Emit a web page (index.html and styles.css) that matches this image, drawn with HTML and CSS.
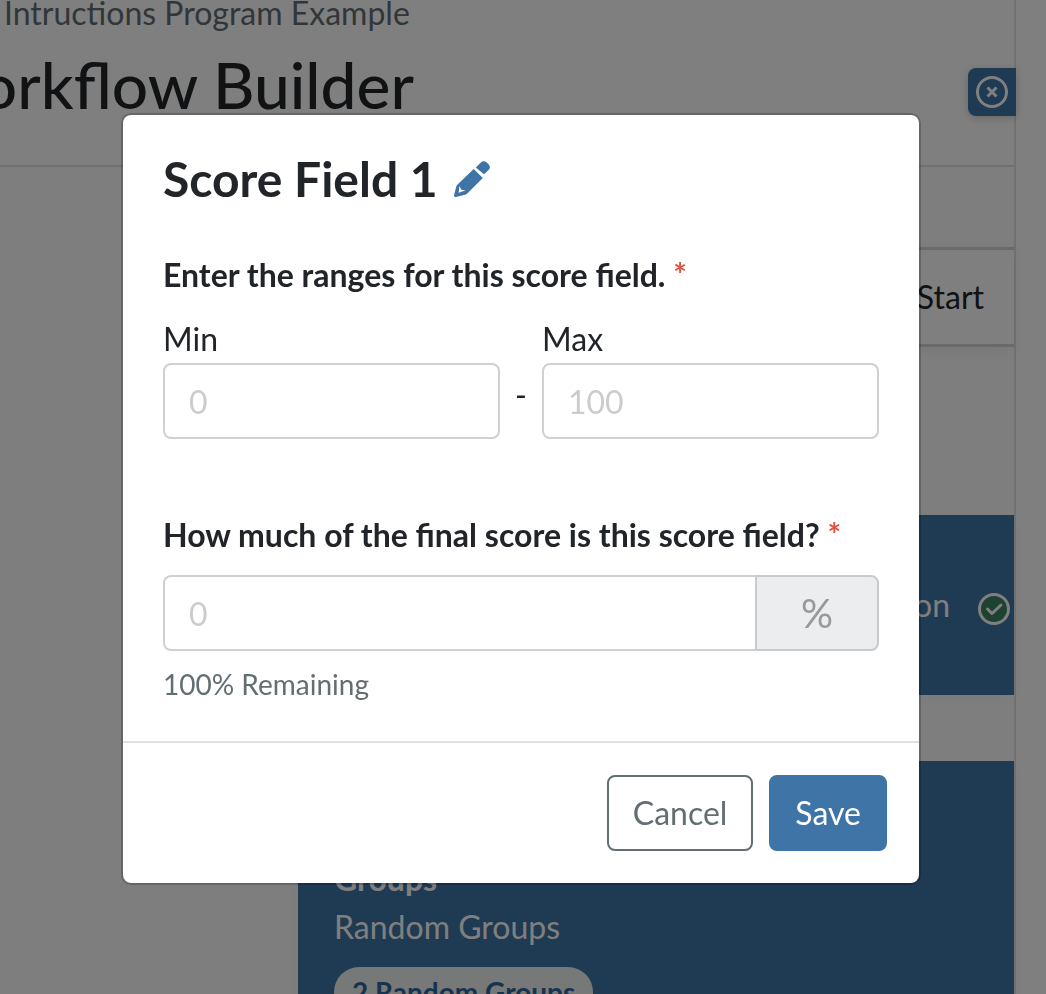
FILE: index.html
```html
<!DOCTYPE html>
<html lang="en">
<head>
    <meta charset="UTF-8">
    <meta name="viewport" content="width=device-width, initial-scale=1.0">
    <title>Workflow Builder</title>
    <link rel="stylesheet" href="styles.css">
</head>
<body>
    <main class="workspace">
        <header class="page-header">
            <p class="program-name">Intructions Program Example</p>
            <h1 class="page-title">Workflow Builder</h1>
            <button class="panel-close" type="button" aria-label="Close">
                <svg width="32" height="32" viewBox="0 0 32 32" fill="none" stroke="currentColor" stroke-width="3">
                    <circle cx="16" cy="16" r="14.5"/>
                    <path d="M11.5 11.5l9 9M20.5 11.5l-9 9"/>
                </svg>
            </button>
        </header>

        <section class="canvas">
            <div class="start-node">Start</div>

            <article class="step-card step-card-summary">
                <span>on</span>
                <svg class="step-check" width="32" height="32" viewBox="0 0 32 32" fill="none" stroke="#fff" stroke-width="3">
                    <circle cx="16" cy="16" r="14.5" fill="#3a8465"/>
                    <path d="M9.5 16l4.5 4.5 9-8.5" stroke-linecap="round" stroke-linejoin="round"/>
                </svg>
            </article>

            <article class="step-card step-card-groups">
                <h2 class="step-title">Groups</h2>
                <p class="step-text">Random Groups</p>
                <span class="step-pill">2 Random Groups</span>
            </article>
        </section>
    </main>

    <div class="modal-backdrop">
        <form class="modal" role="dialog" aria-labelledby="modal-title">
            <div class="modal-body">
                <div class="modal-heading">
                    <h2 class="modal-title" id="modal-title">Score Field 1</h2>
                    <button class="edit-button" type="button" aria-label="Edit name">
                        <svg width="36" height="36" viewBox="0 0 36 36" fill="currentColor">
                            <path d="M22.3 6L26.6 1.7Q29.5-1 32.5 1.2L34.8 3.5Q37.2 6.5 34.5 9L30.6 12.8Q30 13.4 29.4 12.8L22.3 6.9Q21.8 6.4 22.3 6z"/>
                            <path fill-rule="evenodd" d="M19.7 7.9L28.8 17 13.5 32.3Q12.5 33.4 11 33.8L2 36Q0 36.3 0 34.2L2.3 25.5Q2.7 24.3 3.8 23.3zM5.4 25L4.7 31.7 11.5 29.3 7.4 28.7z"/>
                        </svg>
                    </button>
                </div>

                <fieldset class="range">
                    <legend class="question">Enter the ranges for this score field. <span class="required">*</span></legend>
                    <div class="range-row">
                        <div class="range-field">
                            <label for="min">Min</label>
                            <input class="text-input" type="text" id="min" placeholder="0">
                        </div>
                        <span class="range-dash">-</span>
                        <div class="range-field">
                            <label for="max">Max</label>
                            <input class="text-input" type="text" id="max" placeholder="100">
                        </div>
                    </div>
                </fieldset>

                <label class="question" for="weight">How much of the final score is this score field? <span class="required">*</span></label>
                <div class="input-group">
                    <input class="text-input" type="text" id="weight" placeholder="0">
                    <span class="input-addon">%</span>
                </div>
                <p class="help-text">100% Remaining</p>
            </div>
            <div class="modal-footer">
                <button class="btn btn-outline" type="button">Cancel</button>
                <button class="btn btn-primary" type="button">Save</button>
            </div>
        </form>
    </div>
</body>
</html>
```

FILE: styles.css
```css
* {
    box-sizing: border-box;
}

body {
    margin: 0;
    height: 100vh;
    overflow: hidden;
    background: #fff;
    color: #212529;
    font-family: Lato, "Liberation Sans", sans-serif;
    font-size: 32px;
    line-height: 48px;
}

h1, h2, p {
    margin: 0;
}

button, input {
    font: inherit;
}

svg {
    display: block;
}

/* Page behind the dialog */
.workspace {
    min-height: 100vh;
    margin-right: 30px;
    border-right: 2px solid #e0e2e5;
}

.page-header {
    position: relative;
    padding-bottom: 42px;
    border-bottom: 2px solid #e0e2e5;
}

.program-name {
    padding: 0 0 21px 4px;
    color: #636e72;
    line-height: 25px;
}

.page-title {
    margin-left: -82px;
    font-size: 64px;
    font-weight: 500;
    line-height: 77px;
}

.panel-close {
    position: absolute;
    top: 68px;
    right: -2px;
    padding: 8px;
    border: 0;
    border-radius: 8px 0 0 8px;
    background: #3e74a6;
    color: #fff;
    box-shadow: 0 2px 8px rgba(0, 0, 0, 0.2);
}

.canvas {
    padding: 80px 0 0 298px;
    background: #fdfdfd;
}

.start-node {
    padding: 23px 30px;
    border: solid #d4d5d7;
    border-width: 3px 0;
    background: #fff;
    text-align: right;
    box-shadow: 0 4px 16px rgba(0, 0, 0, 0.05);
}

.step-card {
    background: #3e74a6;
    color: #fff;
    box-shadow: 0 4px 16px rgba(0, 0, 0, 0.03);
}

.step-card-summary {
    display: flex;
    align-items: center;
    justify-content: flex-end;
    gap: 28px;
    height: 180px;
    margin-top: 168px;
    padding-right: 4px;
}

.step-check {
    margin-top: 8px;
}

.step-card-groups {
    margin-top: 66px;
    padding: 94px 36px 36px;
}

.step-title {
    font-size: 32px;
}

.step-pill {
    display: inline-block;
    margin-top: 16px;
    padding: 4px 18px;
    border-radius: 25px;
    background: #eef3f3;
    color: #2f669c;
    font-size: 28px;
    font-weight: 700;
    line-height: 42px;
}

/* Dialog */
.modal-backdrop {
    position: fixed;
    inset: 0;
    display: flex;
    align-items: center;
    justify-content: center;
    padding: 4px 4px 0 0;
    background: rgba(0, 0, 0, 0.5);
}

.modal {
    width: 100%;
    max-width: 800px;
    border: 2px solid rgba(0, 0, 0, 0.2);
    border-radius: 10px;
    background: #fff;
    background-clip: padding-box;
}

.modal-body {
    padding: 40px 40px 36px;
}

.modal-heading {
    display: flex;
    align-items: center;
    gap: 16px;
    margin-bottom: 48px;
}

.modal-title {
    font-size: 48px;
    font-weight: 700;
    line-height: 48px;
}

.edit-button {
    padding: 0;
    border: 0;
    background: none;
    color: #3e74a6;
}

.range {
    min-width: 0;
    margin: 0 0 72px;
    padding: 0;
    border: 0;
}

.question {
    display: block;
    margin-bottom: 16px;
    padding: 0;
    font-weight: 700;
}

.required {
    color: #e15241;
}

.range-row {
    display: flex;
    align-items: flex-end;
}

.range-field {
    flex: 1;
    min-width: 0;
}

.range-field label {
    display: block;
}

.range-dash {
    width: 42px;
    padding-bottom: 20px;
    text-align: center;
}

.text-input {
    display: block;
    width: 100%;
    height: 76px;
    padding: 12px 24px;
    border: 2px solid #ced0d1;
    border-radius: 8px;
    background: #fff;
    color: #212529;
}

.text-input::placeholder {
    color: #cbcccc;
    opacity: 1;
}

.input-group {
    display: flex;
}

.input-group .text-input {
    flex: 1;
    min-width: 0;
    border-right: 0;
    border-radius: 8px 0 0 8px;
}

.input-addon {
    display: flex;
    align-items: center;
    justify-content: center;
    width: 124px;
    border: 2px solid #c9cacb;
    border-radius: 0 8px 8px 0;
    background: #ecedef;
    color: #999;
    font-size: 40px;
}

.help-text {
    margin-top: 12px;
    color: #636e72;
    font-size: 28px;
    line-height: 42px;
}

.modal-footer {
    display: flex;
    justify-content: flex-end;
    gap: 16px;
    padding: 32px;
    border-top: 2px solid #dee2e6;
}

.btn {
    padding: 12px 24px;
    border: 2px solid #3e74a6;
    border-radius: 8px;
    line-height: 48px;
    cursor: pointer;
}

.btn-outline {
    border-color: #636e72;
    background: #fff;
    color: #636e72;
}

.btn-primary {
    background: #3e74a6;
    color: #fff;
}
```
